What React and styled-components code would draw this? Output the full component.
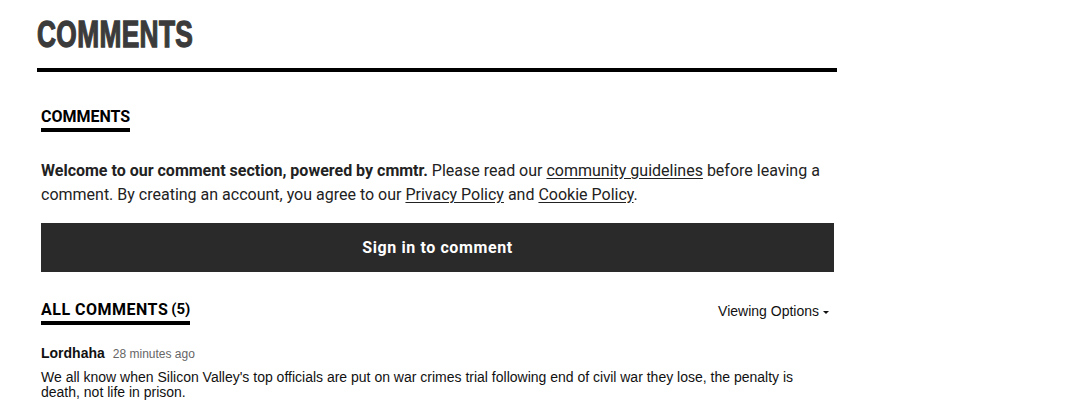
import React from 'react';
import styled, { createGlobalStyle } from 'styled-components';

const Global = createGlobalStyle`
  html, body {
    margin: 0;
    padding: 0;
    background: #fff;
  }
  body {
    font-family: Roboto, "Liberation Sans", sans-serif;
  }
`;

const Page = styled.div`
  width: 800px;
  padding: 15px 0 0 37px;
`;

const PageTitle = styled.h1`
  margin: 0;
  font-family: "Liberation Sans", Arial, sans-serif;
  font-weight: 700;
  font-size: 36px;
  line-height: 40px;
  color: #3b3b3b;
  -webkit-text-stroke: 1.3px #3b3b3b;
  letter-spacing: 0.5px;
  transform: scaleX(0.73);
  transform-origin: left center;
  white-space: nowrap;
`;

const TitleRule = styled.div`
  height: 4px;
  background: #000;
  margin-top: 13px;
`;

const Section = styled.section`
  padding: 0 3px 0 4px;
`;

const TabHead = styled.div`
  display: inline-flex;
  align-items: flex-start;
  gap: 3px;
  padding-bottom: 1px;
  border-bottom: 4px solid #000;
  font-family: Roboto, sans-serif;
  font-weight: 700;
  font-size: 16px;
  line-height: 20px;
  color: #000;
  margin-top: ${p => p.$top || 0}px;
`;

const Label = styled.span`
  letter-spacing: ${p => p.$spacing || 0}px;
`;

const Count = styled.span`
  font-size: 15px;
  position: relative;
  top: -1px;
`;

const Intro = styled.p`
  margin: 27px 0 0;
  font-family: Roboto, sans-serif;
  font-size: 16px;
  line-height: 24px;
  color: #222;
  b { font-weight: 700; }
  a {
    color: #222;
    text-decoration: underline;
    text-underline-offset: 2px;
  }
`;

const SignIn = styled.button`
  display: block;
  width: 100%;
  height: 49px;
  margin-top: 16px;
  border: 0;
  background: #2a2a2a;
  color: #fff;
  font-family: Roboto, sans-serif;
  font-weight: 700;
  font-size: 16px;
  letter-spacing: 0.6px;
  cursor: pointer;
`;

const ListHeader = styled.div`
  display: flex;
  justify-content: space-between;
  align-items: flex-start;
  margin-top: 28px;
`;

const Viewing = styled.div`
  display: flex;
  align-items: center;
  gap: 4px;
  margin-top: 2px;
  margin-right: 5px;
  font-family: "Liberation Sans", Arial, sans-serif;
  font-size: 14px;
  line-height: 18px;
  color: #111;
`;

const Caret = styled.span`
  width: 0;
  height: 0;
  margin-top: 2px;
  border-left: 3px solid transparent;
  border-right: 3px solid transparent;
  border-top: 3px solid #111;
`;

const Comment = styled.article`
  margin-top: 20px;
  font-family: "Liberation Sans", Arial, sans-serif;
`;

const Meta = styled.div`
  display: flex;
  align-items: baseline;
  gap: 8px;
`;

const Author = styled.span`
  font-weight: 700;
  font-size: 14px;
  color: #111;
`;

const Time = styled.span`
  font-size: 12px;
  color: #666;
`;

const Body = styled.p`
  margin: 9px 0 0;
  font-size: 14px;
  line-height: 15px;
  color: #111;
  max-width: 770px;
`;

export default function App() {
  return (
    <>
      <Global />
      <Page>
        <PageTitle>COMMENTS</PageTitle>
        <TitleRule />
        <Section>
          <TabHead $top={35}>
            <Label>COMMENTS</Label>
          </TabHead>
          <Intro>
            <b>Welcome to our comment section, powered by cmmtr.</b> Please read our{' '}
            <a href="#">community guidelines</a> before leaving a comment. By creating an
            account, you agree to our <a href="#">Privacy Policy</a> and{' '}
            <a href="#">Cookie Policy</a>.
          </Intro>
          <SignIn>Sign in to comment</SignIn>
          <ListHeader>
            <TabHead>
              <Label $spacing={0.5}>ALL COMMENTS</Label>
              <Count>(5)</Count>
            </TabHead>
            <Viewing>
              Viewing Options <Caret />
            </Viewing>
          </ListHeader>
          <Comment>
            <Meta>
              <Author>Lordhaha</Author>
              <Time>28 minutes ago</Time>
            </Meta>
            <Body>
              We all know when Silicon Valley's top officials are put on war crimes trial
              following end of civil war they lose, the penalty is death, not life in prison.
            </Body>
          </Comment>
        </Section>
      </Page>
    </>
  );
}
